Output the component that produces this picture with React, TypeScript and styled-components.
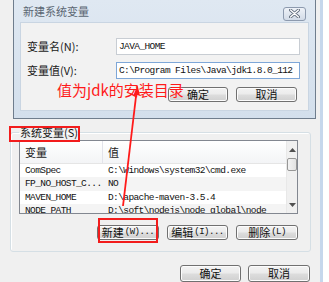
import React from "react";
import styled, { createGlobalStyle } from "styled-components";

const Global = createGlobalStyle`
  html, body { margin: 0; padding: 0; background: #ffffff; }
  body {
    width: 329px; height: 282px; overflow: hidden;
    font-family: "Noto Sans CJK SC", "Noto Sans", sans-serif;
  }
  * { box-sizing: border-box; }
`;

const Screen = styled.div`
  position: relative;
  display: flex;
  width: 329px;
  height: 282px;
  overflow: hidden;
`;

const OuterMain = styled.div`
  width: 320px;
  background: #f0f0f0;
  display: flex;
  flex-direction: column;
`;

const OuterFrame = styled.div`
  width: 3px;
  background: #c5d7ec;
`;

const Desktop = styled.div`
  flex: 1;
  background: #ffffff;
`;

const Dialog = styled.div`
  margin-left: 13px;
  width: 303px;
  height: 121px;
  border: 1px solid #6f7d8d;
  border-top: none;
  background: linear-gradient(#dfe8f2, #d3dfec);
  display: flex;
  flex-direction: column;
  padding: 0 6px 7px 6px;
`;

const TitleBar = styled.div`
  height: 22px;
  display: flex;
  align-items: center;
  justify-content: space-between;
  padding-left: 3px;
  padding-right: 3px;
`;

const Title = styled.span`
  font-size: 11px;
  color: #5b6672;
  line-height: 1;
`;

const CloseBtn = styled.div`
  width: 23px;
  height: 14px;
  margin-top: 5px;
  border: 1px solid #8d9aae;
  border-radius: 3px;
  background: linear-gradient(#eef2f8, #d2dbe7);
  display: flex;
  align-items: center;
  justify-content: center;
`;

const Client = styled.div`
  flex: 1;
  background: #f2f2f2;
  border: 1px solid #c9d5e2;
  padding: 15px 8px 0 6px;
  display: flex;
  flex-direction: column;
`;

const FieldRow = styled.div<{ $gap?: number }>`
  display: grid;
  grid-template-columns: 89px 184px;
  align-items: center;
  margin-bottom: ${(p) => p.$gap ?? 0}px;
`;

const Label = styled.span`
  font-size: 11px;
  color: #1a1a1a;
  line-height: 1;
`;

const Input = styled.div<{ $focus?: boolean }>`
  height: 17px;
  background: #ffffff;
  border: 1px solid ${(p) => (p.$focus ? "#7ea7d8" : "#c8cdd3")};
  display: flex;
  align-items: center;
  padding-left: 2px;
`;

const Mono = styled.span`
  font-family: "Liberation Mono", monospace;
  font-size: 9.5px;
  letter-spacing: -0.6px;
  color: #111;
  white-space: nowrap;
  line-height: 1;
`;

const ButtonRow = styled.div<{ $pad?: number; $gap?: number; $top?: number }>`
  display: flex;
  justify-content: flex-end;
  gap: ${(p) => p.$gap ?? 8}px;
  padding-right: ${(p) => p.$pad ?? 0}px;
  margin-top: ${(p) => p.$top ?? 0}px;
`;

const Button = styled.div<{ $w?: number; $h?: number }>`
  width: ${(p) => p.$w ?? 60}px;
  height: ${(p) => p.$h ?? 15}px;
  border: 1px solid #707070;
  border-radius: 3px;
  background: linear-gradient(#f3f3f3 0%, #ebebeb 48%, #dddddd 52%, #d0d0d0 100%);
  box-shadow: inset 0 0 0 1px #fcfcfc;
  display: flex;
  align-items: center;
  justify-content: center;
  font-size: 11px;
  color: #111;
  line-height: 1;
`;

const BtnMono = styled.span`
  font-family: "Liberation Mono", monospace;
  font-size: 9px;
  letter-spacing: -0.5px;
  margin-left: 1px;
`;

const Group = styled.fieldset`
  margin: 5px 0 0 10px;
  width: 301px;
  height: 130px;
  border: 1px solid #d5dfe5;
  border-radius: 3px;
  box-shadow: inset 1px 1px 0 #ffffff;
  padding: 0 12px 9px 8px;
  display: flex;
  flex-direction: column;
`;

const Legend = styled.legend`
  font-size: 11px;
  color: #1a1a1a;
  padding: 0 1px;
  margin-left: 0;
  line-height: 16px;
  height: 16px;
`;

const List = styled.div`
  height: 74px;
  border: 1px solid #828790;
  background: #ffffff;
  display: flex;
  overflow: hidden;
`;

const ListBody = styled.div`
  flex: 1;
  display: flex;
  flex-direction: column;
`;

const Header = styled.div`
  height: 23px;
  flex: none;
  display: grid;
  grid-template-columns: 83px 1fr;
  background: linear-gradient(#ffffff, #f3f4f6);
  border-bottom: 1px solid #e5e5e5;
`;

const HeadCell = styled.div<{ $div?: boolean }>`
  display: flex;
  align-items: center;
  padding-left: 5px;
  font-size: 11px;
  color: #1a1a1a;
  border-right: ${(p) => (p.$div ? "1px solid #e2e3ea" : "none")};
`;

const Row = styled.div<{ $alt?: boolean }>`
  height: 13.3px;
  flex: none;
  display: grid;
  grid-template-columns: 83px 1fr;
  align-items: center;
  background: ${(p) => (p.$alt ? "#f4f4f4" : "#ffffff")};
`;

const Cell = styled.div`
  padding-left: 5px;
  overflow: hidden;
  white-space: nowrap;
  display: flex;
  align-items: center;
`;

const ScrollBar = styled.div`
  width: 11px;
  flex: none;
  background: #f0f0f0;
  border-left: 1px solid #e8e8e8;
  display: flex;
  flex-direction: column;
  align-items: center;
`;

const Arrow = styled.div`
  height: 17px;
  display: flex;
  align-items: center;
  justify-content: center;
`;

const Thumb = styled.div`
  width: 10px;
  height: 13px;
  border: 1px solid #979797;
  border-radius: 2px;
  background: linear-gradient(90deg, #f3f3f3, #e2e2e2);
`;

const Spacer = styled.div`
  flex: 1;
`;

const RedBox = styled.div<{ $x: number; $y: number; $w: number; $h: number }>`
  position: absolute;
  left: ${(p) => p.$x}px;
  top: ${(p) => p.$y}px;
  width: ${(p) => p.$w}px;
  height: ${(p) => p.$h}px;
  border: 2px solid #f21c1c;
  pointer-events: none;
`;

const Note = styled.div`
  position: absolute;
  left: 57px;
  top: 80px;
  font-size: 15px;
  color: #ff1a1a;
  white-space: nowrap;
  line-height: 20px;
  font-family: "Noto Sans CJK SC", sans-serif;
`;

const Overlay = styled.svg`
  position: absolute;
  left: 0;
  top: 0;
  pointer-events: none;
`;

const rows: [string, string][] = [
  ["ComSpec", "C:\\Windows\\system32\\cmd.exe"],
  ["FP_NO_HOST_C...", "NO"],
  ["MAVEN_HOME", "D:\\apache-maven-3.5.4"],
  ["NODE_PATH", "D:\\soft\\nodejs\\node_global\\node"],
];

export default function App() {
  return (
    <>
      <Global />
      <Screen>
        <OuterMain>
          <Dialog>
            <TitleBar>
              <Title>新建系统变量</Title>
              <CloseBtn>
                <svg width="11" height="9" viewBox="0 0 11 9">
                  <path
                    d="M1.5 1 L9.5 8 M9.5 1 L1.5 8"
                    stroke="#5f6b7a"
                    strokeWidth="3"
                    strokeLinecap="round"
                  />
                  <path
                    d="M1.5 1 L9.5 8 M9.5 1 L1.5 8"
                    stroke="#ffffff"
                    strokeWidth="1.4"
                    strokeLinecap="round"
                  />
                </svg>
              </CloseBtn>
            </TitleBar>
            <Client>
              <FieldRow $gap={7}>
                <Label>变量名(N):</Label>
                <Input>
                  <Mono>JAVA_HOME</Mono>
                </Input>
              </FieldRow>
              <FieldRow $gap={8}>
                <Label>变量值(V):</Label>
                <Input $focus>
                  <Mono>C:\Program Files\Java\jdk1.8.0_112</Mono>
                </Input>
              </FieldRow>
              <ButtonRow $pad={3} $gap={8}>
                <Button $w={60}>确定</Button>
                <Button $w={61}>取消</Button>
              </ButtonRow>
            </Client>
          </Dialog>

          <Group>
            <Legend>系统变量(S)</Legend>
            <List>
              <ListBody>
                <Header>
                  <HeadCell $div>变量</HeadCell>
                  <HeadCell>值</HeadCell>
                </Header>
                {rows.map(([k, v], i) => (
                  <Row key={k} $alt={i % 2 === 1}>
                    <Cell>
                      <Mono>{k}</Mono>
                    </Cell>
                    <Cell>
                      <Mono>{v}</Mono>
                    </Cell>
                  </Row>
                ))}
              </ListBody>
              <ScrollBar>
                <Arrow>
                  <svg width="7" height="4" viewBox="0 0 7 4">
                    <path d="M0 4 L3.5 0 L7 4 Z" fill="#505050" />
                  </svg>
                </Arrow>
                <Thumb />
                <Spacer />
                <Arrow>
                  <svg width="7" height="4" viewBox="0 0 7 4">
                    <path d="M0 0 L3.5 4 L7 0 Z" fill="#505050" />
                  </svg>
                </Arrow>
              </ScrollBar>
            </List>
            <ButtonRow $pad={0} $gap={8} $top={11}>
              <Button $w={62}>
                新建<BtnMono>(W)...</BtnMono>
              </Button>
              <Button $w={61}>
                编辑<BtnMono>(I)...</BtnMono>
              </Button>
              <Button $w={62}>
                删除<BtnMono>(L)</BtnMono>
              </Button>
            </ButtonRow>
          </Group>

          <ButtonRow $pad={10} $gap={7} $top={13}>
            <Button $w={61} $h={17}>确定</Button>
            <Button $w={62} $h={17}>取消</Button>
          </ButtonRow>
        </OuterMain>
        <OuterFrame />
        <Desktop />

        <Note>值为jdk的安装目录</Note>
        <RedBox $x={9} $y={126} $w={71} $h={16} />
        <RedBox $x={98} $y={218} $w={60} $h={25} />
        <Overlay width="329" height="282" viewBox="0 0 329 282">
          <line x1="123" y1="206" x2="136.4" y2="93" stroke="#ff1a1a" strokeWidth="1.8" />
          <path d="M137.5 85 L133.5 95 L140 95.6 Z" fill="#ff1a1a" />
        </Overlay>
      </Screen>
    </>
  );
}
